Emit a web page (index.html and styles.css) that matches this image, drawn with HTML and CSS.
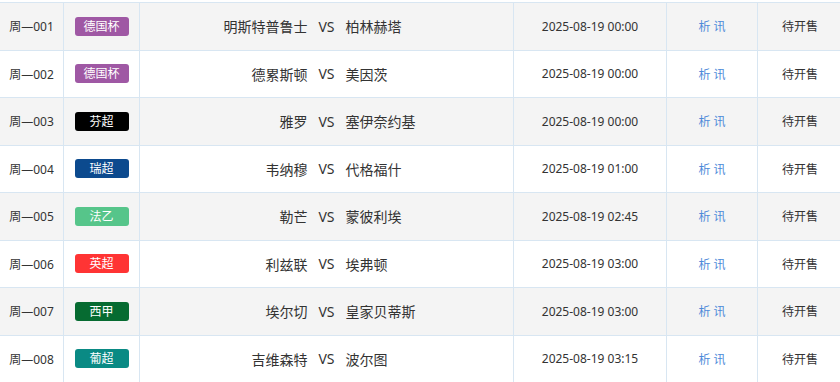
FILE: index.html
```html
<!DOCTYPE html>
<html lang="zh-CN">
<head>
<meta charset="utf-8">
<title>赛程</title>
<link rel="stylesheet" href="styles.css">
</head>
<body>
<table class="matches">
  <colgroup>
    <col class="c-no"><col class="c-league"><col class="c-teams"><col class="c-time"><col class="c-info"><col class="c-status">
  </colgroup>
  <tbody>
    <tr>
      <td>周—001</td>
      <td><span class="badge b-dfb">德国杯</span></td>
      <td><div class="teams"><span class="home">明斯特普鲁士</span><span class="vs">VS</span><span class="away">柏林赫塔</span></div></td>
      <td>2025-08-19 00:00</td>
      <td><a class="info" href="#">析 讯</a></td>
      <td>待开售</td>
    </tr>
    <tr>
      <td>周—002</td>
      <td><span class="badge b-dfb">德国杯</span></td>
      <td><div class="teams"><span class="home">德累斯顿</span><span class="vs">VS</span><span class="away">美因茨</span></div></td>
      <td>2025-08-19 00:00</td>
      <td><a class="info" href="#">析 讯</a></td>
      <td>待开售</td>
    </tr>
    <tr>
      <td>周—003</td>
      <td><span class="badge b-fin">芬超</span></td>
      <td><div class="teams"><span class="home">雅罗</span><span class="vs">VS</span><span class="away">塞伊奈约基</span></div></td>
      <td>2025-08-19 00:00</td>
      <td><a class="info" href="#">析 讯</a></td>
      <td>待开售</td>
    </tr>
    <tr>
      <td>周—004</td>
      <td><span class="badge b-swe">瑞超</span></td>
      <td><div class="teams"><span class="home">韦纳穆</span><span class="vs">VS</span><span class="away">代格福什</span></div></td>
      <td>2025-08-19 01:00</td>
      <td><a class="info" href="#">析 讯</a></td>
      <td>待开售</td>
    </tr>
    <tr>
      <td>周—005</td>
      <td><span class="badge b-fra">法乙</span></td>
      <td><div class="teams"><span class="home">勒芒</span><span class="vs">VS</span><span class="away">蒙彼利埃</span></div></td>
      <td>2025-08-19 02:45</td>
      <td><a class="info" href="#">析 讯</a></td>
      <td>待开售</td>
    </tr>
    <tr>
      <td>周—006</td>
      <td><span class="badge b-epl">英超</span></td>
      <td><div class="teams"><span class="home">利兹联</span><span class="vs">VS</span><span class="away">埃弗顿</span></div></td>
      <td>2025-08-19 03:00</td>
      <td><a class="info" href="#">析 讯</a></td>
      <td>待开售</td>
    </tr>
    <tr>
      <td>周—007</td>
      <td><span class="badge b-liga">西甲</span></td>
      <td><div class="teams"><span class="home">埃尔切</span><span class="vs">VS</span><span class="away">皇家贝蒂斯</span></div></td>
      <td>2025-08-19 03:00</td>
      <td><a class="info" href="#">析 讯</a></td>
      <td>待开售</td>
    </tr>
    <tr>
      <td>周—008</td>
      <td><span class="badge b-por">葡超</span></td>
      <td><div class="teams"><span class="home">吉维森特</span><span class="vs">VS</span><span class="away">波尔图</span></div></td>
      <td>2025-08-19 03:15</td>
      <td><a class="info" href="#">析 讯</a></td>
      <td>待开售</td>
    </tr>
  </tbody>
</table>
</body>
</html>
```
FILE: styles.css
```css
html, body {
  margin: 0;
  padding: 0;
  background: #ffffff;
  overflow: hidden;
}
body {
  padding-top: 2px;
  font-family: "Noto Sans", "Noto Sans CJK SC", sans-serif;
  font-size: 12px;
  color: #333333;
}
.matches {
  border-collapse: collapse;
  table-layout: fixed;
  width: 843px;
  margin-left: -1px;
}
.c-no { width: 64px; }
.c-league { width: 76px; }
.c-teams { width: 374px; }
.c-time { width: 153px; }
.c-info { width: 91px; }
.c-status { width: 85px; }
.matches td {
  border: 1px solid #d8e6f2;
  height: 46.5px;
  padding: 0;
  text-align: center;
  vertical-align: middle;
  white-space: nowrap;
}
.matches tr:nth-child(odd) td {
  background: #f4f4f4;
}
.badge {
  display: inline-block;
  width: 54px;
  height: 19px;
  line-height: 19px;
  border-radius: 3px;
  color: #ffffff;
  font-size: 12px;
  vertical-align: middle;
}
.b-dfb { background: #9f58a4; }
.b-fin { background: #000000; }
.b-swe { background: #0c4a8e; }
.b-fra { background: #56c58a; }
.b-epl { background: #ff3434; }
.b-liga { background: #066b31; }
.b-por { background: #0a8a84; }
.teams {
  display: flex;
  align-items: center;
  font-size: 14px;
}
.home {
  flex: 1;
  text-align: right;
}
.away {
  flex: 1;
  text-align: left;
}
.vs {
  padding: 0 11px;
}
.info {
  color: #4d8ad9;
  text-decoration: none;
}
```
